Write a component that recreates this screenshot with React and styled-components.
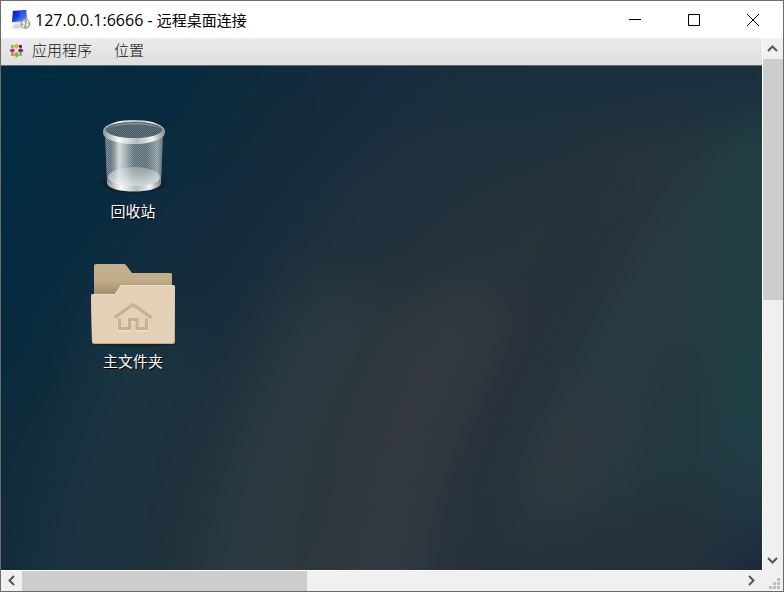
import React from "react";
import styled, { createGlobalStyle } from "styled-components";

const GlobalStyle = createGlobalStyle`
  * { box-sizing: border-box; }
  body {
    margin: 0;
    font-family: "Open Sans", "Noto Sans CJK SC", sans-serif;
    font-size: 15px;
  }
  button { font: inherit; border: 0; padding: 0; background: none; color: inherit; }
`;

const Window = styled.main`
  display: flex;
  flex-direction: column;
  min-height: 100vh;
  border: 1px solid #6b6b6b;
  background: #fff;
`;

const TitleBar = styled.header`
  display: flex;
  align-items: center;
  height: 37px;
  padding-left: 10px;
`;

const Title = styled.h1`
  flex: 1;
  margin: 0 0 0 4px;
  font-size: 15px;
  line-height: 20px;
  font-weight: 400;
  color: #000;
  white-space: nowrap;
`;

const Address = styled.span`
  font-size: 16px;
`;

const WindowButton = styled.button`
  display: grid;
  place-items: center;
  width: 59px;
  height: 37px;
  &:hover { background: #e5e5e5; }
`;

const Viewport = styled.div`
  flex: 1;
  display: grid;
  grid-template-columns: 1fr 20px;
  grid-template-rows: 1fr 20px;
  column-gap: 1px;
`;

const RemoteScreen = styled.section`
  display: flex;
  flex-direction: column;
  min-width: 0;
  border-bottom: 1px solid #fff;
`;

const MenuBar = styled.nav`
  display: flex;
  align-items: center;
  height: 28px;
  padding: 0 0 3px 8px;
  background: linear-gradient(#ebebeb, #dfdfdf);
  border-bottom: 1px solid #66696b;
`;

const MenuButton = styled.button`
  display: flex;
  align-items: center;
  gap: 8px;
  margin-right: 22px;
  line-height: 24px;
  font-weight: 300;
  color: #0e1416;
`;

const Desktop = styled.div`
  position: relative;
  isolation: isolate;
  overflow: hidden;
  flex: 1;
  display: flex;
  flex-direction: column;
  align-items: flex-start;
  gap: 36px;
  padding: 41px 84px;
  background: #22303b;
`;

const WallpaperDrawing = styled.svg`
  position: absolute;
  inset: 0;
  z-index: -1;
  width: 100%;
  height: 100%;
`;

const DesktopItem = styled.button`
  display: flex;
  flex-direction: column;
  align-items: center;
  width: 96px;
  color: #fff;
  line-height: 20px;
  text-shadow: 1px 1px 0 #000;
`;

const ScrollBar = styled.div`
  display: flex;
  flex-direction: ${(p) => (p.$vertical ? "column" : "row")};
  background: #f0f0f0;
`;

const ScrollArrow = styled.button`
  display: grid;
  place-items: center;
  flex: none;
  width: ${(p) => (p.$vertical ? "20px" : "21px")};
  height: ${(p) => (p.$vertical ? "21px" : "20px")};
`;

const ScrollTrack = styled.div`
  flex: 1;
  display: flex;
  flex-direction: ${(p) => (p.$vertical ? "column" : "row")};
`;

const ScrollThumb = styled.div`
  flex: 0 0 ${(p) => p.$share}%;
  background: #cdcdcd;
`;

const SizeGrip = styled.div`
  display: flex;
  align-items: flex-end;
  justify-content: flex-end;
  margin-left: -1px;
  padding: 0 3px 2px 0;
  background: #f0f0f0;
`;

const streaks = [
  { d: "M-30 560C0 440 20 380 30 330", color: "#122c3b", width: 90, opacity: 0.8 },
  { d: "M60 290C110 220 140 180 200 120", color: "#152d43", width: 60, opacity: 0.5 },
  { d: "M80 560C80 440 100 370 170 260", color: "#1c3440", width: 100, opacity: 0.9 },
  { d: "M160 560C160 450 165 400 190 340", color: "#1f323c", width: 40, opacity: 0.7 },
  { d: "M235 560C240 430 270 340 350 220", color: "#2b3b42", width: 90, opacity: 0.9 },
  { d: "M180 190C240 130 330 60 430 -20", color: "#162c41", width: 70, opacity: 0.6 },
  { d: "M310 560C310 430 340 340 420 240", color: "#2e373b", width: 60, opacity: 0.8 },
  { d: "M375 560C385 440 410 350 480 230", color: "#363b42", width: 70, opacity: 0.9 },
  { d: "M340 180C430 110 500 80 580 60", color: "#20323f", width: 90, opacity: 0.8 },
  { d: "M460 560C460 440 490 320 610 120", color: "#28313a", width: 60, opacity: 0.8 },
  { d: "M590 400C620 310 650 260 700 160", color: "#2a3c41", width: 80, opacity: 0.8 },
  { d: "M545 450C560 410 575 380 590 340", color: "#343840", width: 60, opacity: 0.8 },
  { d: "M480 540C570 500 640 480 720 460", color: "#272f39", width: 80, opacity: 0.8 },
  { d: "M430 20L800 0", color: "#19303d", width: 110, opacity: 0.9 },
  { d: "M780 60C710 170 740 280 780 380", color: "#214247", width: 80, opacity: 0.8 },
  { d: "M640 390L700 260", color: "#25363d", width: 40, opacity: 0.7 },
  { d: "M720 560L800 470", color: "#1a273a", width: 70, opacity: 1 },
];

const Wallpaper = () => (
  <WallpaperDrawing viewBox="0 0 761 504" preserveAspectRatio="none" aria-hidden="true">
    <defs>
      <linearGradient id="night" gradientUnits="userSpaceOnUse" x1="40" y1="0" x2="720" y2="420">
        <stop offset="0" stopColor="#022b41" />
        <stop offset=".15" stopColor="#072a3e" />
        <stop offset=".32" stopColor="#152c3b" />
        <stop offset=".5" stopColor="#23313b" />
        <stop offset=".65" stopColor="#29343b" />
        <stop offset=".85" stopColor="#243840" />
        <stop offset="1" stopColor="#213a43" />
      </linearGradient>
      <filter
        id="soften"
        filterUnits="userSpaceOnUse"
        x="-200"
        y="-200"
        width="1161"
        height="904"
        colorInterpolationFilters="sRGB"
      >
        <feGaussianBlur stdDeviation="26" />
      </filter>
    </defs>
    <g filter="url(#soften)" fill="none">
      <rect x="-200" y="-200" width="1161" height="904" fill="url(#night)" />
      {streaks.map((s) => (
        <path key={s.d} d={s.d} stroke={s.color} strokeWidth={s.width} opacity={s.opacity} />
      ))}
    </g>
  </WallpaperDrawing>
);

const RemoteIcon = () => (
  <svg width="20" height="20" viewBox="0 0 20 20" aria-hidden="true">
    <defs>
      <linearGradient id="screen" x1="0" y1="0" x2="1" y2="1">
        <stop offset="0" stopColor="#071bb0" />
        <stop offset=".45" stopColor="#1738dc" />
        <stop offset="1" stopColor="#8db8f4" />
      </linearGradient>
    </defs>
    <path d="M1 0L16 0L17 12L1 13Z" fill="#d6dce4" />
    <path d="M2 1L15 0L16 11L1 12Z" fill="url(#screen)" />
    <path d="M8 1L15 0L15.500 7L10 10Z" fill="#4066ec" opacity=".6" />
    <path d="M4 14L11 13L12 18L4 19L1 17Z" fill="#d5d9dc" />
    <circle cx="14.500" cy="14" r="4.500" fill="#b9bfbd" stroke="#989e9c" />
    <path d="M12 12L14 14.500L12 17M17 11L15 13.500L17 16" fill="none" stroke="#fff" strokeWidth="1.400" />
    <path d="M13.500 17L15.500 11" stroke="#5aa45c" />
  </svg>
);

const petals = [
  { point: "#e0b02a", corner: "#4b2a80" },
  { point: "#7d2b86", corner: "#8fbf3a" },
  { point: "#7fb52c", corner: "#e0892b" },
  { point: "#c22a7d", corner: "#8cba4a" },
];
const AppsIcon = () => (
  <svg width="15" height="15" viewBox="-8 -8 16 16" aria-hidden="true">
    {petals.map((petal, i) => (
      <g key={petal.point} transform={`rotate(${i * 90})`}>
        <path d="M0 -7.500L2 -5.500V-3L0 -1.500L-2 -3V-5.500Z" fill={petal.point} />
        <path d="M2.400 -5.800H5.800V-2.400H4L2.400 -4Z" fill={petal.corner} />
      </g>
    ))}
  </svg>
);

const TrashIcon = () => (
  <svg width="96" height="94" viewBox="0 0 96 94" aria-hidden="true">
    <defs>
      <pattern id="mesh" width="2" height="2" patternUnits="userSpaceOnUse">
        <rect width="1" height="1" fill="#c9d3d6" />
        <rect x="1" y="1" width="1" height="1" fill="#c9d3d6" />
      </pattern>
      <linearGradient id="shine">
        <stop offset="0" stopColor="#c4cccd" stopOpacity=".2" />
        <stop offset=".1" stopColor="#9faaad" stopOpacity=".3" />
        <stop offset=".24" stopColor="#eef1f1" stopOpacity=".85" />
        <stop offset=".36" stopColor="#dfe5e6" stopOpacity=".6" />
        <stop offset=".5" stopColor="#8b9ba1" stopOpacity=".4" />
        <stop offset=".7" stopColor="#8e9da3" stopOpacity=".3" />
        <stop offset=".9" stopColor="#dfe5e5" stopOpacity=".5" />
        <stop offset="1" stopColor="#8c989c" stopOpacity=".3" />
      </linearGradient>
      <linearGradient id="metal">
        <stop offset="0" stopColor="#8e9292" />
        <stop offset=".25" stopColor="#fafafa" />
        <stop offset=".55" stopColor="#b9bcbc" />
        <stop offset=".8" stopColor="#f1f1f1" />
        <stop offset="1" stopColor="#858a8a" />
      </linearGradient>
      <linearGradient id="floor" x1="0" y1="0" x2="0" y2="1">
        <stop offset="0" stopColor="#d6dcda" stopOpacity=".4" />
        <stop offset="1" stopColor="#fff" stopOpacity=".75" />
      </linearGradient>
      <radialGradient id="shadow">
        <stop offset=".6" stopColor="#000" stopOpacity=".5" />
        <stop offset="1" stopColor="#000" stopOpacity="0" />
      </radialGradient>
    </defs>
    <ellipse cx="49" cy="76" rx="36" ry="11" fill="url(#shadow)" />
    <path d="M20 26L22 76C27 86 71 86 76 76L78 26Z" fill="#3c535e" />
    <ellipse cx="49" cy="24" rx="28" ry="9" fill="#445b66" />
    <path d="M20 25C24 12 74 12 78 25L76 76C71 86 27 86 22 76Z" fill="url(#mesh)" opacity=".22" />
    <path d="M20 28C28 38 70 38 78 28L76 76C71 86 27 86 22 76Z" fill="url(#shine)" />
    <path d="M20 28C28 38 70 38 78 28L76 76C71 86 27 86 22 76Z" fill="url(#mesh)" opacity=".16" />
    <ellipse cx="49" cy="70" rx="26" ry="10" fill="url(#floor)" />
    <path d="M22 72C26 81 72 81 76 72V77C72 87 26 87 22 77Z" fill="url(#metal)" />
    <path d="M18 24A31 11 0 0 1 80 24V26A31 11 0 0 1 18 26ZM21 23A28 8 0 0 0 77 23A28 8 0 0 0 21 23Z" fill="url(#metal)" fillRule="evenodd" />
    <path d="M22 22C28 14 70 14 76 22C68 16 30 16 22 22Z" fill="#8a918f" />
  </svg>
);

const FolderIcon = () => (
  <svg width="96" height="94" viewBox="0 0 96 94" aria-hidden="true">
    <defs>
      <linearGradient id="folderBack" x1="0" y1="0" x2="0" y2="1">
        <stop offset="0" stopColor="#c3b18d" />
        <stop offset=".24" stopColor="#c2af89" />
        <stop offset=".45" stopColor="#a5936f" />
      </linearGradient>
    </defs>
    <path d="M7 86H90V88Q48 91 7 88Z" fill="#000" opacity=".25" />
    <path d="M9 9Q9 7 11 7H39Q40 7 41 8L47 16H86Q87 16 87 18V70H9Z" fill="url(#folderBack)" />
    <path d="M6 39Q6 37 8 37H30L35 29Q36 28 38 28H88Q90 28 90 30V85Q90 87 88 87H9Q7 87 7 85Z" fill="#c5a885" />
    <path d="M6 39Q6 37 8 37H30L35 29Q36 28 38 28H88Q90 28 90 30L89 84Q89 86 87 86H9Q7 86 7 84Z" fill="#e4d0b6" />
    <path d="M8 37.500H30.500L36 28.500H88" fill="none" stroke="#eedfcb" />
    <g fill="none" strokeWidth="3">
      <path d="M34 63V73H44V63H52V73H62V63" stroke="#efdfcb" />
      <path d="M29.500 60.500L48 47.500L66.500 60.500M34.500 61.500V71.500H44.500V62.500H52V71.500H61.500V61.500" stroke="#c8b092" />
    </g>
  </svg>
);

const arrowTurn = { up: 0, right: 90, down: 180, left: 270 };
const Chevron = ({ direction }) => (
  <svg width="12" height="12" viewBox="0 0 12 12" aria-hidden="true">
    <path
      d="M1 8L5.500 3.500L10 8"
      transform={`rotate(${arrowTurn[direction]} 5.500 5.500)`}
      fill="none"
      stroke="#555"
      strokeWidth="2"
    />
  </svg>
);

const controls = [
  { label: "最小化", path: "M0 5.500H12" },
  { label: "最大化", path: "M.5 .5H11.500V11.500H.5Z" },
  { label: "关闭", path: "M0 0L12 12M12 0L0 12" },
];

const gripDots = [[8, 0], [4, 4], [8, 4], [0, 8], [4, 8], [8, 8]];

const Scroller = ({ vertical, share }) => (
  <ScrollBar $vertical={vertical}>
    <ScrollArrow $vertical={vertical} aria-label={vertical ? "向上" : "向左"}>
      <Chevron direction={vertical ? "up" : "left"} />
    </ScrollArrow>
    <ScrollTrack $vertical={vertical}>
      <ScrollThumb $share={share} />
    </ScrollTrack>
    <ScrollArrow $vertical={vertical} aria-label={vertical ? "向下" : "向右"}>
      <Chevron direction={vertical ? "down" : "right"} />
    </ScrollArrow>
  </ScrollBar>
);

export default function App() {
  return (
    <>
      <GlobalStyle />
      <Window>
        <TitleBar>
          <RemoteIcon />
          <Title>
            <Address>127.0.0.1:6666 - </Address>
            远程桌面连接
          </Title>
          {controls.map((c) => (
            <WindowButton key={c.label} aria-label={c.label}>
              <svg width="13" height="12" viewBox="0 0 13 12" aria-hidden="true">
                <path d={c.path} fill="none" stroke="#000" />
              </svg>
            </WindowButton>
          ))}
        </TitleBar>
        <Viewport>
          <RemoteScreen>
            <MenuBar>
              <MenuButton>
                <AppsIcon />
                应用程序
              </MenuButton>
              <MenuButton>位置</MenuButton>
            </MenuBar>
            <Desktop>
              <Wallpaper />
              <DesktopItem>
                <TrashIcon />
                回收站
              </DesktopItem>
              <DesktopItem>
                <FolderIcon />
                主文件夹
              </DesktopItem>
            </Desktop>
          </RemoteScreen>
          <Scroller vertical share={49} />
          <Scroller share={39.6} />
          <SizeGrip>
            <svg width="11" height="11" viewBox="0 0 11 11" aria-hidden="true">
              {gripDots.map(([x, y]) => (
                <rect key={`${x}-${y}`} x={x} y={y} width="3" height="3" fill="#bfbfbf" />
              ))}
            </svg>
          </SizeGrip>
        </Viewport>
      </Window>
    </>
  );
}
